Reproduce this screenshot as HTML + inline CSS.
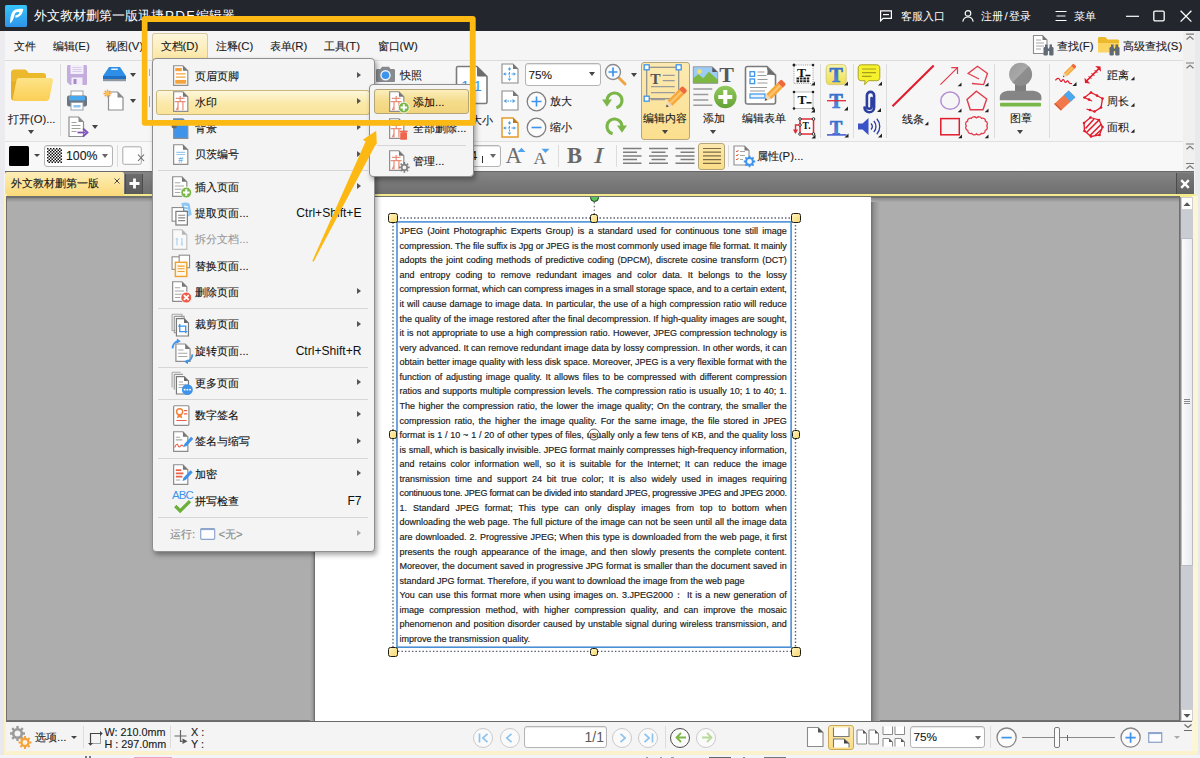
<!DOCTYPE html>
<html lang="zh">
<head>
<meta charset="utf-8">
<title>PDF Editor</title>
<style>
*{box-sizing:border-box;margin:0;padding:0}
html,body{width:1200px;height:758px;overflow:hidden;background:#f4f5f6}
body{position:relative;font-family:"Liberation Sans",sans-serif;font-size:11.4px;color:#1a1a1a;line-height:1}
.a{position:absolute}
.t{position:absolute;white-space:nowrap;line-height:14px;height:14px;-webkit-text-stroke:0.12px currentColor}
svg{position:absolute;overflow:visible}
/* title bar */
#title{left:0;top:0;width:1200px;height:31px;background:#23262d}
#title .t{color:#fff;-webkit-text-stroke:0}
/* menubar */
#menubar{left:0;top:31px;width:1200px;height:29px;background:#f5f5f6}
/* toolbars */
#tb1{left:5px;top:60px;width:1178px;height:81px;background:#f6f6f7;border-top:1px solid #dcdcdc}
#tb2{left:4.5px;top:141px;width:1179px;height:30px;background:#f8f8f9;border-top:1px solid #e0e0e0}
.vsep{position:absolute;width:1px;background:#dcdcdc}
.combo{position:absolute;background:#fff;border:1px solid #b4b4b4;border-radius:3px;box-shadow:inset 0 1px 1px #e4e4e4}
.dd{position:absolute;width:0;height:0;border-left:3.5px solid transparent;border-right:3.5px solid transparent;border-top:4px solid #444}
.cn{position:absolute;width:0;height:0;border-left:4px solid transparent;border-bottom:4px solid #222}
/* tab bar */
#tabbar{left:5px;top:171px;width:1189px;height:23px;background:linear-gradient(#5c5c5c 0,#858585 7%,#7b7b7b 45%,#6f6f6f 100%)}
#tab{left:5.3px;top:172px;width:118.7px;height:24px;background:linear-gradient(#fdeeb8,#fbd978);border-radius:2px 2px 0 0}
#yl{left:4px;top:194px;width:1191px;height:2.5px;background:#f3ea8e}
/* doc */
#doc{left:6px;top:196px;width:1174px;height:525px;background:#adadad;border:1px solid #6f6f6f;border-top:2px solid #707070}
#page{left:315px;top:197px;width:556px;height:524px;background:#fff}
.ln{position:absolute;left:0;white-space:nowrap;-webkit-text-stroke:0.18px #1d1d1d;text-align:justify;text-align-last:justify;height:14px;line-height:14px}
.ln.nj{text-align:left;text-align-last:left}
.h{position:absolute;background:linear-gradient(135deg,#fff4c0,#f8d870);border:1.5px solid #1f1d10;border-radius:2.5px}
/* status */
#status{left:6px;top:722px;width:1186px;height:29px;background:#f4f4f5}
.circ{position:absolute;width:20px;height:20px;border-radius:50%;border:1px solid #c9c9c9;background:#fafafa}
/* menus */
.menu{position:absolute;background:#f4f4f4;border:1px solid #8e8e8e;border-radius:4px;box-shadow:2px 3px 5px rgba(0,0,0,.35)}
.mi{position:absolute;left:42.3px;white-space:nowrap;height:14px;line-height:14px;font-size:11.3px;color:#111;-webkit-text-stroke:0.12px currentColor}
.msep{position:absolute;left:5px;right:6px;height:1px;background:#d6d6d6}
.marr{position:absolute;left:203.5px;margin-top:0.3px;width:0;height:0;border-top:3.7px solid transparent;border-bottom:3.7px solid transparent;border-left:4.5px solid #555}
.sc{position:absolute;right:12.5px;white-space:nowrap;height:14px;line-height:14px;font-size:12.1px;color:#111}
</style>
</head>
<body>
<!-- TITLE BAR -->
<div id="title" class="a">
<svg style="left:5px;top:5px" width="22" height="22" viewBox="0 0 22 22"><defs><linearGradient id="lg1" x1="0" y1="0" x2="0" y2="1"><stop offset="0" stop-color="#35c4fa"/><stop offset="1" stop-color="#2f94ea"/></linearGradient></defs><rect width="22" height="22" rx="1.5" fill="url(#lg1)"/><path d="M5.2 18.5 C5 12 6.5 6 10.5 4.6 C14 3.4 18.2 3.6 18.3 4.2 C17.5 8.5 15.5 12.3 10.2 12.6 L10.6 10.2 C13 10.2 14.3 8.6 14.4 7.4 C13 6.6 10.6 7 9.8 9 C9 12 8 16 5.2 18.5Z" fill="#fff"/></svg>
<div class="t" style="left:34px;top:8px;font-size:13.4px;line-height:16px;height:16px">外文教材删第一版迅捷<span style="letter-spacing:1.300px;margin-left:1px">PDF</span>编辑器</div>
<svg style="left:880px;top:10px" width="12" height="12" viewBox="0 0 12 12" fill="none" stroke="#fff" stroke-width="1.2"><path d="M0.6 0.8h10.8v7.6H3.2L0.6 10.8z"/><path d="M3 4.6h6" /></svg>
<div class="t" style="left:901px;top:9px">客服入口</div>
<svg style="left:962px;top:10px" width="12" height="12" viewBox="0 0 12 12" fill="none" stroke="#fff" stroke-width="1.2"><circle cx="6" cy="3.4" r="2.8"/><path d="M0.8 11.6c0.6-3 2.6-4.6 5.2-4.6s4.600 1.600 5.200 4.600"/></svg>
<div class="t" style="left:981px;top:9px">注册<span style="padding:0 1.500px">/</span>登录</div>
<svg style="left:1055px;top:10px" width="12" height="12" viewBox="0 0 12 12" fill="none" stroke="#fff" stroke-width="1.2"><path d="M0.500 1.500h11M1.500 6h9M0.500 10.500h11"/></svg>
<div class="t" style="left:1074px;top:9px">菜单</div>
<svg style="left:1126px;top:10px" width="13" height="12" viewBox="0 0 13 12" fill="none" stroke="#fff" stroke-width="1.2"><path d="M0 6.300h13"/></svg>
<svg style="left:1153px;top:10px" width="12" height="12" viewBox="0 0 12 12" fill="none" stroke="#fff" stroke-width="1.300"><rect x="0.800" y="1.200" width="10.400" height="9.600" rx="1.200"/></svg>
<svg style="left:1180px;top:10px" width="12" height="12" viewBox="0 0 12 12" fill="none" stroke="#fff" stroke-width="1.300"><path d="M0.600 0.800l10.800 10.800M11.400 0.800L0.600 11.600"/></svg>
</div>
<!-- MENU BAR -->
<div id="menubar" class="a">
<div class="a" style="left:0;top:0;width:4.500px;height:29px;background:#ebebf0"></div>
<div class="a" style="left:152px;top:1.500px;width:55.500px;height:27.500px;background:linear-gradient(#fdf6dc,#fbe6a2);border:1px solid #d8c9a0;border-bottom:none;border-radius:3px 3px 0 0"></div>
<div class="t" style="left:13.500px;top:7.500px">文件</div>
<div class="t" style="left:52.500px;top:7.500px">编辑(E)</div>
<div class="t" style="left:106px;top:7.500px">视图(V)</div>
<div class="t" style="left:160.500px;top:7.500px">文档(D)</div>
<div class="t" style="left:215.500px;top:7.500px">注释(C)</div>
<div class="t" style="left:269.500px;top:7.500px">表单(R)</div>
<div class="t" style="left:323.500px;top:7.500px">工具(T)</div>
<div class="t" style="left:377.500px;top:7.500px">窗口(W)</div>
<div class="t" style="left:1057px;top:7.500px">查找(F)</div>
<div class="t" style="left:1123px;top:7.500px">高级查找(S)</div>
</div>
<!-- TOOLBARS -->
<div id="tb1" class="a"></div>
<div id="tb2" class="a"></div>
<div id="tbi" class="a" style="left:0;top:0;width:0;height:0">
<!-- left window strip -->
<div class="a" style="left:0;top:60px;width:4.500px;height:112px;background:#ebebf0"></div>
<div class="a" style="left:1183px;top:31px;width:12px;height:140px;background:#f0f0f1"></div>
<div class="a" style="left:1195px;top:31px;width:5px;height:727px;background:#e9eaec"></div>
<!-- folder -->
<svg style="left:9px;top:67px" width="45" height="36" viewBox="0 0 45 36"><defs><linearGradient id="fo1" x1="0" y1="0" x2="0" y2="1"><stop offset="0" stop-color="#fde388"/><stop offset="1" stop-color="#fbcf55"/></linearGradient></defs><path d="M2 6.500c0-2.500 1-4 3.500-4h9.500c1.500 0 2.500 0.500 3.300 1.700l1.400 1.800h14.300c2 0 3 1 3 3v6h-35z" fill="#ecb92c"/><path d="M2 14.500h34.500v16c0 2-1 3-3 3h-28.500c-2 0-3-1-3-3z" fill="#e5ae22"/><path d="M7.500 13.500c0.300-1.800 1.300-2.500 3-2.500h31c2 0 2.800 1 2.400 3l-3.400 17c-0.400 2-1.500 3-3.500 3h-30c-2.500 0-3.500-1.500-3-3.500z" fill="url(#fo1)"/></svg>
<div class="t" style="left:8px;top:111.500px;font-size:11.200px">打开(O)...</div>
<div class="dd" style="left:27.500px;top:130px"></div>
<div class="vsep" style="left:60px;top:64px;height:72px"></div>
<!-- save -->
<svg style="left:66px;top:64px" width="22" height="22" viewBox="0 0 22 22"><path d="M1 2.500c0-1 0.500-1.500 1.500-1.500h17c1 0 1.500 0.500 1.500 1.500v17c0 1-0.500 1.500-1.500 1.500h-15.500l-3-3z" fill="#c3addd"/><rect x="4.500" y="1" width="13" height="9" fill="#f3eefa"/><path d="M6.500 3.500h9M6.500 5.500h9M6.500 7.500h9" stroke="#d5c8e8" stroke-width="0.900"/><rect x="5.500" y="13.500" width="11" height="7.500" fill="#f3eefa"/><rect x="7.500" y="15" width="3" height="5" fill="#a48bc6"/></svg>
<!-- printer -->
<svg style="left:66px;top:90px" width="22" height="21" viewBox="0 0 22 21"><rect x="5" y="1" width="12" height="6" fill="#fff" stroke="#9aa2ab" stroke-width="1"/><rect x="1" y="5.500" width="20" height="11" rx="2" fill="#6d7680"/><rect x="3" y="6" width="16" height="4.500" rx="1" fill="#49a8ee"/><rect x="5" y="12.500" width="12" height="7.500" fill="#fff" stroke="#9aa2ab" stroke-width="1"/><rect x="7.500" y="15" width="7" height="2.500" fill="#8cc6f2"/></svg>
<!-- export -->
<svg style="left:68px;top:116px" width="21" height="22" viewBox="0 0 21 22"><path d="M1 1h9.500l5 5v14.500h-14.500z" fill="#fff" stroke="#8d8d8d" stroke-width="1.200"/><path d="M10.500 1v5h5z" fill="#8a8a8a"/><path d="M3.500 6.500h5M3.500 9.500h9M3.500 12.500h9M3.500 15.500h5" stroke="#a0a0a0" stroke-width="1"/><path d="M9.500 16.500h8" stroke="#7b50b8" stroke-width="1.800"/><path d="M15 12.500l4.500 4-4.500 4" fill="none" stroke="#7b50b8" stroke-width="1.800"/></svg>
<div class="dd" style="left:92px;top:124.500px"></div>
<!-- scanner -->
<svg style="left:102px;top:66px" width="25" height="16" viewBox="0 0 25 16"><path d="M7 1h11l6 9h-23z" fill="#2f8fe6"/><path d="M9.500 2.500h6l0.500 1.500h-7z" fill="#e9f3fd"/><rect x="1" y="10" width="23" height="3" fill="#1f6fc4"/><rect x="1" y="13" width="23" height="2.200" fill="#8f979f"/></svg>
<div class="dd" style="left:129.500px;top:72.500px"></div>
<!-- new doc -->
<svg style="left:103px;top:89px" width="22" height="22" viewBox="0 0 22 22"><path d="M5.500 3h9l5.500 5.500v12.500h-14.500z" fill="#fff" stroke="#8d8d8d" stroke-width="1.200"/><path d="M14.500 3v5.500h5.500z" fill="#8a8a8a"/><g stroke="#f5a33a" stroke-width="1.300"><path d="M4.500 0.500v8M0.500 4.500h8M1.700 1.700l5.600 5.600M7.300 1.700l-5.600 5.600"/></g><circle cx="4.500" cy="4.500" r="2" fill="#fbc15a"/></svg>
<div class="dd" style="left:129.500px;top:99px"></div>
<div class="a" style="left:148.500px;top:69px;width:1.500px;height:7px;background:#8ab8ea"></div><div class="a" style="left:148.500px;top:96px;width:1.500px;height:11px;background:#8ab8ea"></div>
<!-- camera / snapshot -->
<svg style="left:375px;top:66px" width="21" height="17" viewBox="0 0 21 17"><path d="M1 4.500c0-1 0.500-1.500 1.500-1.500h3l1.500-2.200h7l1.500 2.200h3c1 0 1.500 0.500 1.500 1.500v10c0 1-0.500 1.500-1.500 1.500h-16c-1 0-1.500-0.500-1.500-1.500z" fill="#86898e"/><circle cx="10.500" cy="9.300" r="5.200" fill="#eef4fb"/><circle cx="10.500" cy="9.300" r="3.800" fill="#3d94ea"/></svg>
<div class="t" style="left:399.500px;top:68px">快照</div>
<!-- 1:1 page -->
<svg style="left:455px;top:65px" width="34" height="40" viewBox="0 0 34 40"><path d="M1.500 3c0-1 0.500-1.500 1.500-1.500h19l10 10v25.500c0 1-0.500 1.500-1.500 1.500h-27.500c-1 0-1.500-0.500-1.500-1.500z" fill="#fff" stroke="#7c7c7c" stroke-width="1.600"/><path d="M22 1.500v8.500c0 1 0.500 1.500 1.500 1.500h8.500z" fill="#6c6c6c"/><text x="16.500" y="26" font-family="Liberation Sans" font-size="15" fill="#3d94ea" text-anchor="middle">1:1</text></svg>
<div class="t" style="left:449px;top:112.500px">实际大小</div>
<!-- fit page icons -->
<svg style="left:501px;top:63px" width="18" height="21" viewBox="0 0 18 21"><path d="M1 1h11l5 5v14h-16z" fill="#fff" stroke="#8a8a8a" stroke-width="1.100"/><path d="M12 1v5h5z" fill="#777"/><g stroke="#4a9fe8" stroke-width="1.100" fill="#4a9fe8"><path d="M8.500 5.500v10M3.500 11h10" stroke-dasharray="2 1.500"/><path d="M8.500 4l1.800 2.500h-3.600zM8.500 18l1.800-2.500h-3.600zM2 11l2.500-1.800v3.600zM15 11l-2.500-1.800v3.600z" stroke="none"/></g></svg>
<svg style="left:501px;top:90px" width="18" height="21" viewBox="0 0 18 21"><path d="M1 1h11l5 5v14h-16z" fill="#fff" stroke="#8a8a8a" stroke-width="1.100"/><path d="M12 1v5h5z" fill="#777"/><g fill="#4a9fe8"><path d="M2.500 11l3-2v4zM14.500 11l-3-2v4z"/><rect x="6.500" y="10.400" width="1.500" height="1.200"/><rect x="9" y="10.400" width="1.500" height="1.200"/></g></svg>
<svg style="left:501px;top:116.500px" width="18" height="21" viewBox="0 0 18 21"><path d="M1 1h11l5 5v14h-16z" fill="#fff" stroke="#e39a2d" stroke-width="1.500"/><path d="M12 1v5h5z" fill="#b77a1e"/><g stroke="#4a9fe8" stroke-width="1.100" fill="#4a9fe8"><path d="M8.500 5.500v10M3.500 11h10" stroke-dasharray="2 1.500"/><path d="M8.500 4l1.800 2.500h-3.600zM8.500 18l1.800-2.500h-3.600zM2 11l2.500-1.800v3.600zM15 11l-2.500-1.800v3.600z" stroke="none"/></g></svg>
<!-- zoom combo -->
<div class="combo" style="left:524.500px;top:63px;width:76px;height:22.500px"></div>
<div class="t" style="left:528.500px;top:67.500px;font-size:11.800px">75%</div>
<div class="dd" style="left:589px;top:72px"></div>
<!-- magnifier -->
<svg style="left:604px;top:63px" width="24" height="24" viewBox="0 0 24 24"><path d="M14.500 14.500l6.500 6.500" stroke="#f0a542" stroke-width="3" stroke-linecap="round"/><circle cx="9" cy="9" r="7.500" fill="#f7fbff" stroke="#8a8a8a" stroke-width="1.300"/><path d="M9 4.500v9M4.500 9h9" stroke="#3d94ea" stroke-width="1.700"/></svg>
<div class="dd" style="left:630.500px;top:72.500px"></div>
<!-- zoom in/out -->
<svg style="left:526px;top:90.500px" width="21" height="21" viewBox="0 0 21 21"><circle cx="10.500" cy="10.500" r="9.300" fill="#fbfbfb" stroke="#7f7f7f" stroke-width="1.300"/><path d="M10.500 5.500v10M5.500 10.500h10" stroke="#3d94ea" stroke-width="1.600"/></svg>
<div class="t" style="left:550px;top:94px">放大</div>
<svg style="left:526px;top:116.500px" width="21" height="21" viewBox="0 0 21 21"><circle cx="10.500" cy="10.500" r="9.300" fill="#fbfbfb" stroke="#7f7f7f" stroke-width="1.300"/><path d="M5.500 10.500h10" stroke="#3d94ea" stroke-width="1.600"/></svg>
<div class="t" style="left:550px;top:120px">缩小</div>
<!-- rotate -->
<svg style="left:602px;top:90px" width="25" height="22" viewBox="0 0 25 22"><path d="M14.400 17.750A7.500 7.500 0 1 0 5 10.500" fill="none" stroke="#7ab648" stroke-width="3.200"/><path d="M0 9.500h10l-5 7.200z" fill="#7ab648"/></svg>
<svg style="left:602px;top:115.500px" width="25" height="22" viewBox="0 0 25 22"><g transform="translate(25,0) scale(-1,1)"><path d="M14.400 17.750A7.500 7.500 0 1 0 5 10.500" fill="none" stroke="#7ab648" stroke-width="3.200"/><path d="M0 9.500h10l-5 7.200z" fill="#7ab648"/></g></svg>
<!-- edit content (highlighted) -->
<div class="a" style="left:641px;top:62px;width:49px;height:78px;background:linear-gradient(#fceab2,#fbdf8e);border:1px solid #b5a67a;border-radius:3px"></div>
<svg style="left:643px;top:63px" width="47" height="47" viewBox="0 0 47 47"><defs><g id="pencil"><path d="M1.500-6.500L13-18 18-13 6.500-1.500z" fill="#f7a83c"/><path d="M4-4L15.500-15.500" stroke="#fbc66e" stroke-width="2.200"/><path d="M13-18l2.300-2.300q1.200-1.200 2.400 0l2.600 2.600q1.200 1.200 0 2.400L18-13z" fill="#ee6a3c"/><path d="M0 0L1.500-6.500 6.500-1.500z" fill="#ead9bd"/><path d="M0 0L0.700-2.800 2.800-0.700z" fill="#5a4a3a"/></g></defs>
<rect x="3.700" y="4.300" width="32" height="31.400" fill="none" stroke="#8d8d8d" stroke-width="1.200"/>
<g fill="#fff" stroke="#3d94ea" stroke-width="1.300"><rect x="1.200" y="1.800" width="5" height="5"/><rect x="33.200" y="1.800" width="5" height="5"/><rect x="1.200" y="33.200" width="5" height="5"/></g>
<text x="7.300" y="21" font-family="Liberation Serif" font-weight="bold" font-size="15.500" fill="#555">T</text>
<path d="M19.700 12.300h12M19.700 17.700h12M8 23.700h23.700M8 29.700h23.700M8 36.600h14" stroke="#9b9b9b" stroke-width="1.200"/>
<use href="#pencil" transform="translate(23,44.300)"/></svg>
<div class="t" style="left:642.500px;top:111.300px">编辑内容</div>
<div class="dd" style="left:661.500px;top:130px"></div>
<!-- add -->
<svg style="left:692px;top:64px" width="46" height="46" viewBox="0 0 46 46"><defs><linearGradient id="gr1" x1="0" y1="0" x2="0" y2="1"><stop offset="0" stop-color="#92c95c"/><stop offset="1" stop-color="#64a236"/></linearGradient></defs>
<path d="M1.300 2.700h19l5.400 5.400v11.200h-24.400z" fill="#9ccbf3"/><circle cx="7.500" cy="7.500" r="2.200" fill="#f5e46a"/><path d="M1.300 19.300v-5l5-4 5 4 5.500-6.500 9 8v3.500z" fill="#7cb842"/><path d="M20.300 2.700v5.400h5.400z" fill="#555"/><path d="M1.300 2.700h19l5.400 5.400v11.200h-24.400z" fill="none" stroke="#8d8d8d" stroke-width="0.800"/>
<text x="27.300" y="18" font-family="Liberation Serif" font-weight="bold" font-size="22" fill="#585858">T</text>
<path d="M1.300 25h19M1.300 30.400h15M1.300 36h15M1.300 41.300h19" stroke="#9b9b9b" stroke-width="1.500"/>
<circle cx="33.300" cy="33" r="11.300" fill="url(#gr1)"/><path d="M33.300 26v14M26.300 33h14" stroke="#fff" stroke-width="4"/></svg>
<div class="t" style="left:703px;top:111.300px">添加</div>
<div class="dd" style="left:710px;top:130px"></div>
<!-- edit form -->
<svg style="left:743px;top:64px" width="46" height="46" viewBox="0 0 46 46">
<path d="M2.500 4.500c0-1.300 0.700-2 2-2h19.500l8.500 8.500v27c0 1.300-0.700 2-2 2h-26c-1.300 0-2-0.700-2-2z" fill="#fff" stroke="#7a7a7a" stroke-width="1.600"/><path d="M23.500 2.500c1 3 1.500 5.500 0.500 8.500 3-0.500 5.500-0.500 8.500 0.500z" fill="#6c6c6c"/>
<g fill="#fff" stroke="#3d94ea" stroke-width="1.300"><rect x="7" y="7.700" width="4.600" height="4.600"/><rect x="7" y="15" width="4.600" height="4.600"/></g>
<path d="M14.500 8h7M14.500 11.500h9M14.500 15.500h10M14.500 19h10M7 23.500h17M7 27h15" stroke="#9b9b9b" stroke-width="1.200"/>
<rect x="7" y="30" width="15" height="4" fill="#e9f3fd" stroke="#3d94ea" stroke-width="1.200"/>
<use href="#pencil" transform="translate(21.700,36.700)"/></svg>
<div class="t" style="left:742px;top:111.300px">编辑表单</div>
<!-- text tool icons col -->
<svg style="left:792px;top:63px" width="24" height="23" viewBox="0 0 24 23"><rect x="2" y="2" width="19" height="18.500" fill="#fff" stroke="#8a8a8a" stroke-width="0.900" stroke-dasharray="1 1.200"/><g fill="#222"><circle cx="2" cy="2" r="1.500"/><circle cx="21" cy="2" r="1.300"/></g><text x="5" y="13.500" font-family="Liberation Serif" font-weight="bold" font-size="13.500" fill="#111">T</text><path d="M13.500 12.500h5" stroke="#111" stroke-width="1.500"/><path d="M4.500 15.500h13.500M4.500 18.300h13.500" stroke="#222" stroke-width="2" stroke-dasharray="2.600 0.800"/><path d="M23 18.500v4h-4z" fill="#222"/></svg>
<svg style="left:792px;top:89px" width="24" height="24" viewBox="0 0 24 24"><rect x="2" y="3" width="19" height="16.500" fill="#fff" stroke="#b5b5b5" stroke-width="0.900"/><g fill="#222"><circle cx="2" cy="3" r="1.300"/><circle cx="21" cy="3" r="1.300"/><circle cx="2" cy="19.500" r="1.300"/><circle cx="21" cy="19.500" r="1.300"/></g><text x="5.500" y="14.500" font-family="Liberation Serif" font-weight="bold" font-size="13.500" fill="#111">T</text><path d="M14.500 13.800h5" stroke="#111" stroke-width="1.500"/><path d="M23 19.500v4h-4z" fill="#222"/></svg>
<svg style="left:792px;top:116px" width="24" height="24" viewBox="0 0 24 24"><rect x="8" y="3" width="13.500" height="15" fill="#fff" stroke="#e02a36" stroke-width="1.500"/><g fill="#fff" stroke="#222" stroke-width="0.900"><circle cx="8" cy="3" r="1.300"/><circle cx="21.500" cy="3" r="1.300"/><circle cx="8" cy="18" r="1.300"/><circle cx="21.500" cy="18" r="1.300"/><circle cx="8" cy="9" r="1.300"/></g><text x="10.500" y="13" font-family="Liberation Serif" font-weight="bold" font-size="9.500" fill="#111">T.</text><path d="M7 9h-3.500v8" fill="none" stroke="#e02a36" stroke-width="1.400"/><path d="M1 13.500l2.500 4.500 2.500-4.500z" fill="#e02a36"/><path d="M23.500 18.500v4h-4z" fill="#222"/></svg>
<div class="vsep" style="left:820px;top:64px;height:74px"></div>
<!-- T icons col -->
<svg style="left:825px;top:63px" width="24" height="24" viewBox="0 0 24 24"><defs><linearGradient id="yl1" x1="0" y1="0" x2="0" y2="1"><stop offset="0" stop-color="#fbf6a8"/><stop offset="1" stop-color="#efdc52"/></linearGradient><linearGradient id="bl1" x1="0" y1="0" x2="0" y2="1"><stop offset="0" stop-color="#2f63c0"/><stop offset="1" stop-color="#5a9ae6"/></linearGradient></defs><rect x="1.200" y="1.600" width="20" height="20" rx="3.500" fill="url(#yl1)" stroke="#d2c874" stroke-width="0.900"/><text x="11.200" y="19" text-anchor="middle" font-family="Liberation Serif" font-weight="bold" font-size="20" fill="url(#bl1)" stroke="#3b74d0" stroke-width="0.700">T</text><path d="M23 18.500v4h-4z" fill="#222"/></svg>
<svg style="left:825px;top:90px" width="24" height="22" viewBox="0 0 24 22"><text x="11.200" y="18" text-anchor="middle" font-family="Liberation Serif" font-weight="bold" font-size="20" fill="url(#bl1)" stroke="#3b74d0" stroke-width="0.700">T</text><path d="M2 10.700h19" stroke="#e02a36" stroke-width="1.300"/><path d="M23 16.500v4h-4z" fill="#222"/></svg>
<svg style="left:825px;top:117px" width="24" height="22" viewBox="0 0 24 22"><text x="11.200" y="16.500" text-anchor="middle" font-family="Liberation Serif" font-weight="bold" font-size="18.500" fill="url(#bl1)" stroke="#3b74d0" stroke-width="0.700">T</text><path d="M2 17.900h19.500" stroke="#3a55d0" stroke-width="1.500"/><path d="M23.500 16.500v4h-4z" fill="#222"/></svg>
<div class="vsep" style="left:853px;top:64px;height:74px"></div>
<!-- comment col -->
<svg style="left:857px;top:63px" width="26" height="24" viewBox="0 0 26 24"><path d="M4.500 1.800h15c2.200 0 3.300 1.100 3.300 3.300v9.300c0 2.200-1.100 3.300-3.300 3.300h-8l-3.800 4 0.300-4h-3.500c-2.200 0-3.300-1.100-3.300-3.300v-9.300c0-2.200 1.100-3.300 3.300-3.300z" fill="#f6f12a" stroke="#a8a228" stroke-width="1"/><path d="M5 6h14M5 9.700h14M5 13.400h9.500" stroke="#a59f20" stroke-width="1.200"/><path d="M25 18.500v4h-4z" fill="#222"/></svg>
<svg style="left:862px;top:89px" width="20" height="25" viewBox="0 0 20 25"><path d="M9.500 8v8.500a2.300 2.300 0 0 1-4.600 0v-11a3.600 3.600 0 0 1 7.200 0v12a4.800 4.800 0 0 1-9.600 0" fill="none" stroke="#2c3ea0" stroke-width="2.600" stroke-linecap="round" transform="translate(0,1)"/><path d="M19 19v4h-4z" fill="#222"/></svg>
<svg style="left:857px;top:117px" width="26" height="21" viewBox="0 0 26 21"><path d="M1 6.500h4.500l6-5.500v17l-6-5.500h-4.500z" fill="#3a52c8"/><path d="M14 6.500a4.500 4.500 0 0 1 0 6M16.800 4a8 8 0 0 1 0 11M19.800 1.800a11.500 11.500 0 0 1 0 15.400" fill="none" stroke="#2c3ea0" stroke-width="1.300"/><path d="M25 16.500v4h-4z" fill="#222"/></svg>
<div class="vsep" style="left:885.500px;top:64px;height:74px"></div>
<!-- shapes -->
<svg style="left:885px;top:58px" width="115" height="84" viewBox="0 0 115 84" fill="none">
<path d="M7.500 48.200L48.700 7.500" stroke="#e01c2c" stroke-width="2.100"/>
<path d="M55.400 26.600L72.300 9.900M66.300 9.700l6.200 0 0 6.200" stroke="#e23a4a" stroke-width="1.200"/>
<ellipse cx="65.100" cy="42.700" rx="9.300" ry="8.600" stroke="#b48fd0" stroke-width="1.500"/>
<rect x="55.800" y="60.600" width="18.500" height="16.200" stroke="#e01c2c" stroke-width="1.500"/>
<path d="M94 21L83.100 15.500 92.500 8.300 102.500 15.500 98.600 26.600 87 25.500" stroke="#e23a4a" stroke-width="1.300"/>
<path d="M91.400 33.200L101.700 41 98 51.800H85.300L82 41.500z" stroke="#e23a4a" stroke-width="1.400"/>
<path d="M91.700 59.800c1.500-1.600 4-1.300 4.800 0.500 2.200-0.800 4.200 0.800 3.900 2.900 2 0.600 2.600 3 1.300 4.600 1.300 1.700 0.500 4.100-1.500 4.600 0.200 2.200-1.800 3.700-3.900 2.900-0.900 2-3.500 2.200-4.800 0.600-1.300 1.600-3.900 1.400-4.800-0.600-2.100 0.800-4.100-0.700-3.900-2.900-2-0.500-2.800-2.900-1.500-4.600-1.300-1.600-0.700-4 1.300-4.600-0.300-2.100 1.700-3.700 3.900-2.900 0.800-1.800 3.300-2.100 4.800-0.500z" stroke="#e23a4a" stroke-width="1.300"/>
<g fill="#222"><path d="M43.400 63.500v3.800h-3.800z"/><path d="M76.500 24.500v3.800h-3.800z"/><path d="M76.500 50.500v3.800h-3.800z"/><path d="M77 76.500v3.800h-3.800z"/><path d="M103.500 24.500v3.800h-3.800z"/><path d="M103.500 50.500v3.800h-3.800z"/><path d="M103.500 76.500v3.800h-3.800z"/></g>
</svg>
<div class="t" style="left:902px;top:111.500px">线条</div>
<div class="vsep" style="left:994px;top:64px;height:74px"></div>
<!-- stamp -->
<svg style="left:998px;top:62px" width="45" height="46" viewBox="0 0 45 46"><defs><linearGradient id="st1" x1="0" y1="0" x2="1" y2="1"><stop offset="0" stop-color="#9a9a9a"/><stop offset="0.480" stop-color="#a8a8a8"/><stop offset="0.520" stop-color="#8e8e8e"/><stop offset="1" stop-color="#8a8a8a"/></linearGradient></defs>
<path d="M17 18h11v12h-11z" fill="#7e7e7e"/><circle cx="22.600" cy="12.300" r="11.500" fill="url(#st1)"/>
<path d="M1.800 38.300v-3c0-4 4-6.500 10-6.500h21.600c6 0 10 2.500 10 6.500v3z" fill="#858585"/>
<rect x="2" y="40.700" width="41" height="3.800" rx="1" fill="#7ab648"/></svg>
<div class="t" style="left:1009.500px;top:111px">图章</div>
<div class="dd" style="left:1016.500px;top:129.500px"></div>
<div class="vsep" style="left:1048.500px;top:64px;height:74px"></div>
<!-- pencil squiggle -->
<svg style="left:1054px;top:62px" width="24" height="26" viewBox="0 0 24 26"><use href="#pencil" transform="translate(8.800,15.200) scale(0.640)"/><path d="M1.400 18.400c1.500-2.500 3.500-2.800 4.300-0.800 0.600 1.500 1.200 2.800 2.300 1 0.900-1.500 1.700-1.200 2.300 0.300 0.500 1.400 1.200 2.200 2.200 0.700 0.900-1.300 1.600-0.900 2.100 0.400 0.500 1.300 1.500 1.800 3.500 1.500" fill="none" stroke="#e01c2c" stroke-width="1.200"/><path d="M22.500 20v4h-4z" fill="#222"/></svg>
<!-- eraser -->
<svg style="left:1053px;top:89px" width="24" height="23" viewBox="0 0 24 23"><path d="M1.200 15L15.700 1.600 22.400 8.300 7.900 21.600z" fill="#f0784a"/><path d="M10.900 6L15.700 1.600 22.400 8.300 17.600 12.700z" fill="#4aa8f0"/><path d="M1.200 15l6.700 6.600 1-0.900-6.700-6.600z" fill="#d45a30"/></svg>
<!-- distance -->
<svg style="left:1083px;top:65px" width="20" height="20" viewBox="0 0 20 20" fill="none" stroke="#e01c2c"><path d="M3 16.500L16.500 3" stroke-width="1.700"/><path d="M1.500 12.700l0.500 5.300 5.300 0.500zM18 6.800l-0.500-5.300-5.300-0.500z" fill="#e01c2c" stroke="none"/><path d="M5.500 11l3 3M8.500 8l3 3M11.500 5l3 3" stroke-width="1"/></svg>
<div class="t" style="left:1106.500px;top:67.500px">距离</div>
<!-- perimeter -->
<svg style="left:1083px;top:91px" width="22" height="22" viewBox="0 0 22 22" fill="none" stroke="#e01c2c" stroke-width="1.300"><path d="M9 10L1.500 6.500 8 1.500 19.500 7.500 18 16.500 11.500 20.500 3.500 18"/><g fill="#e01c2c" stroke="none"><circle cx="1.500" cy="6.500" r="1.300"/><circle cx="8" cy="1.500" r="1.300"/><circle cx="19.500" cy="7.500" r="1.300"/><circle cx="18" cy="16.500" r="1.300"/><circle cx="11.500" cy="20.500" r="1.300"/><circle cx="6" cy="8.600" r="1.300"/><circle cx="14" cy="4.600" r="1.300"/><circle cx="7" cy="19" r="1.300"/></g></svg>
<div class="t" style="left:1106.500px;top:93.500px">周长</div>
<!-- area -->
<svg style="left:1082px;top:116px" width="22" height="22" viewBox="0 0 22 22" fill="none" stroke="#e01c2c" stroke-width="1.300"><path d="M8.500 1.500L17 4l3.500 7-3 8-8.500 1.500L2.500 15 2 7z"/><path d="M3.500 12.500L12 3M4.500 16.500L16.500 4.500M8 19.500L19.500 8M13 19.500L20 13" stroke-width="1.500"/><g fill="#e01c2c" stroke="none"><circle cx="8.500" cy="1.500" r="1.300"/><circle cx="17" cy="4" r="1.300"/><circle cx="20.500" cy="11" r="1.300"/><circle cx="17.500" cy="19" r="1.300"/><circle cx="9" cy="20.500" r="1.300"/><circle cx="2.500" cy="15" r="1.300"/><circle cx="2" cy="7" r="1.300"/></g></svg>
<div class="t" style="left:1106.500px;top:119.500px">面积</div>
<svg style="left:1130px;top:75px" width="6" height="60" viewBox="0 0 6 60" fill="#222"><path d="M4.500 1.500v3.800h-3.800z"/><path d="M4.500 28v3.800h-3.800z"/><path d="M4.500 54v3.800h-3.800z"/></svg>
<!-- chevrons on right -->
<svg style="left:1184px;top:31px" width="12" height="142" viewBox="0 0 12 142" fill="none" stroke="#7a7a7a" stroke-width="1.200"><path d="M2 3.200h8M2.500 8.500l3.500-3 3.500 3M2 32h8M2.500 37.300l3.500-3 3.500 3M2 113h8M2.500 118.300l3.500-3 3.500 3M2 132.500h8M2.500 137.800l3.500-3 3.500 3"/></svg>
<!-- find icons in menubar -->
<svg style="left:1032px;top:34px" width="24" height="23" viewBox="0 0 24 23"><path d="M1.500 1.500h9l4.500 4.500v13.500h-13.500z" fill="#fff" stroke="#8d8d8d" stroke-width="1.100"/><path d="M10.500 1.500v4.500h4.500z" fill="#777"/><path d="M4 6h5M4 9h8M4 12h8M4 15h5" stroke="#a5a5a5" stroke-width="1"/><g fill="#5f6a75"><rect x="11.500" y="13" width="4.300" height="8.500" rx="1.200"/><rect x="17.200" y="13" width="4.300" height="8.500" rx="1.200"/><rect x="13" y="10.500" width="2.500" height="4"/><rect x="17.500" y="10.500" width="2.500" height="4"/><rect x="15" y="14.500" width="3" height="2.500"/></g></svg>
<svg style="left:1097px;top:35px" width="25" height="22" viewBox="0 0 25 22"><path d="M1 3.500c0-1 0.500-1.500 1.500-1.500h6l2 2.500h10c1 0 1.500 0.500 1.500 1.500v10.500h-21z" fill="#ecb92c"/><path d="M1 8h21l-1.500 9.500h-19.500z" fill="#fbd462"/><g fill="#5f6a75"><rect x="12.500" y="12" width="4.300" height="8.500" rx="1.200"/><rect x="18.200" y="12" width="4.300" height="8.500" rx="1.200"/><rect x="14" y="9.500" width="2.500" height="4"/><rect x="18.500" y="9.500" width="2.500" height="4"/><rect x="16" y="13.500" width="3" height="2.500"/></g></svg>
<!-- ROW 2 -->
<div class="a" style="left:9px;top:146px;width:20px;height:20px;background:#000;border-radius:1.500px"></div>
<div class="dd" style="left:34px;top:153.500px;border-left-width:3px;border-right-width:3px;border-top-width:3.500px"></div>
<div class="combo" style="left:43.500px;top:144.500px;width:69.500px;height:22.500px"></div>
<svg style="left:47px;top:148px" width="15" height="15" viewBox="0 0 15 15"><defs><pattern id="chk" width="3" height="3" patternUnits="userSpaceOnUse"><rect width="3" height="3" fill="#fff"/><rect width="1.500" height="1.500" fill="#111"/><rect x="1.500" y="1.500" width="1.500" height="1.500" fill="#111"/></pattern></defs><rect width="15" height="15" fill="url(#chk)"/></svg>
<div class="t" style="left:66px;top:148.500px;font-size:12.300px">100%</div>
<div class="dd" style="left:101.500px;top:153.500px;border-top-color:#666"></div>
<div class="vsep" style="left:116.500px;top:145px;height:22px"></div>
<svg style="left:122px;top:146px" width="22" height="20" viewBox="0 0 22 20"><rect x="0.800" y="0.800" width="18.500" height="17.500" rx="1.500" fill="#fdfdfd" stroke="#a9a9a9" stroke-width="1"/><path d="M16 8.500l6 6.500M22 8.500l-6 6.500" stroke="#666" stroke-width="1.100"/></svg>
<!-- font-size combo tail -->
<div class="combo" style="left:430px;top:144.500px;width:70.500px;height:22.500px"></div>
<div class="t" style="left:470px;top:148.500px;font-size:13px">4</div>
<div class="a" style="left:481.500px;top:155.500px;width:1.200px;height:7px;background:#333"></div>
<div class="dd" style="left:489.500px;top:153.500px;border-top-color:#666"></div>
<!-- A grow / shrink -->
<div class="t" style="left:505.500px;top:143px;font-family:'Liberation Serif',serif;font-size:22.500px;line-height:26px;height:26px;color:#6c6c6c;-webkit-text-stroke:0">A</div>
<svg style="left:517px;top:146.500px" width="9" height="6" viewBox="0 0 9 6"><path d="M0.500 5L4.500 0.800 8.500 5z" fill="#4fa3ea"/></svg>
<div class="t" style="left:533.500px;top:146.500px;font-family:'Liberation Serif',serif;font-size:17.500px;line-height:22px;height:22px;color:#6c6c6c;-webkit-text-stroke:0">A</div>
<svg style="left:540.500px;top:147.500px" width="9" height="6" viewBox="0 0 9 6"><path d="M0.500 0.800L4.500 5 8.500 0.800z" fill="#4fa3ea"/></svg>
<div class="vsep" style="left:557.500px;top:145px;height:22px"></div>
<div class="t" style="left:567px;top:142px;font-family:'Liberation Serif',serif;font-weight:bold;font-size:22.500px;line-height:28px;height:28px;color:#686868">B</div>
<div class="t" style="left:594px;top:142px;transform:scaleX(1.250);transform-origin:0 0;font-family:'Liberation Serif',serif;font-style:italic;font-size:22.500px;line-height:28px;height:28px;color:#686868">I</div>
<div class="vsep" style="left:616px;top:145px;height:22px"></div>
<!-- aligns -->
<svg style="left:623px;top:147px" width="72" height="18" viewBox="0 0 72 18" stroke="#7e7e7e" stroke-width="1.500"><path d="M0 1.500h18.500M0 5.200h14M0 8.900h18.500M0 12.600h14M0 16.300h18.500"/><path d="M26 1.500h19M28.500 5.200h14M26 8.900h19M28.500 12.600h14M26 16.300h19"/><path d="M52.500 1.500h19M57.500 5.200h14M52.500 8.900h19M57.500 12.600h14M52.500 16.300h19"/></svg>
<div class="a" style="left:698px;top:143px;width:27px;height:26.500px;background:linear-gradient(#fce9ae,#fbdd88);border:1px solid #b5a67a;border-radius:3px"></div>
<svg style="left:702.500px;top:147px" width="19" height="18" viewBox="0 0 19 18" stroke="#7d6c42" stroke-width="1.200"><path d="M0 1.500h18M0 5.200h18M0 8.900h18M0 12.600h18M0 16.300h18"/></svg>
<div class="vsep" style="left:728px;top:145px;height:22px"></div>
<!-- properties -->
<svg style="left:733px;top:145px" width="23" height="23" viewBox="0 0 23 23"><path d="M1 1h10.500l4.500 4.500v14.500h-15z" fill="#fff" stroke="#8d8d8d" stroke-width="1.100"/><path d="M11.500 1v4.500h4.500z" fill="#777"/><path d="M3 6l1 1 1.500-2M3 10l1 1 1.500-2M3 14l1 1 1.500-2" fill="none" stroke="#e8603a" stroke-width="1"/><path d="M7 6.500h5M7 10.500h5M7 14.500h3" stroke="#a5a5a5" stroke-width="1"/><g transform="translate(16.500,16.500) scale(0.820)"><circle r="4.200" fill="#f6f6f7" stroke="#3d94ea" stroke-width="2.400"/><g stroke="#3d94ea" stroke-width="2.200"><path d="M0-7v2.500M0 4.500v2.500M-7 0h2.500M4.500 0h2.500M-5-5l1.800 1.800M3.200 3.200l1.800 1.800M5-5l-1.800 1.800M-3.200 3.200l-1.800 1.800"/></g></g></svg>
<div class="t" style="left:756.800px;top:149px">属性(P)...</div>
</div>
<!-- TAB BAR -->
<div id="tabbar" class="a"></div>
<div id="yl" class="a"></div>
<div id="tab" class="a"></div>
<div class="t" style="left:10.500px;top:175.500px">外文教材删第一版</div>
<svg style="left:113.500px;top:177.500px" width="6" height="6" viewBox="0 0 6 6"><path d="M0.500 0.500l5 5M5.500 0.500l-5 5" stroke="#4a4a4a" stroke-width="1"/></svg>
<div class="a" style="left:125px;top:173.500px;width:18px;height:20px;background:linear-gradient(#6c6c6c,#5a5a5a);border-left:1px solid #4c4c4c;border-right:1px solid #4c4c4c"></div>
<svg style="left:128.500px;top:177.500px" width="11" height="11" viewBox="0 0 11 11"><path d="M5.500 0.500v10M0.500 5.500h10" stroke="#fff" stroke-width="2.800"/></svg>
<div class="a" style="left:1175.500px;top:173px;width:18px;height:21px;background:linear-gradient(#787878,#626262);border-left:1px solid #4c4c4c"></div>
<svg style="left:1179.500px;top:178.500px" width="10" height="10" viewBox="0 0 10 10"><path d="M1.200 1.200l7.600 7.600M8.800 1.200l-7.600 7.600" stroke="#fff" stroke-width="2.400"/></svg>
<!-- DOC -->
<div class="a" style="left:0;top:172px;width:4px;height:586px;background:#e8e8ee"></div><div class="a" style="left:3.500px;top:194px;width:3px;height:561px;background:#fcf1c4"></div>
<div class="a" style="left:1192px;top:196px;width:5.500px;height:559px;background:#fbf6d6;border-radius:0 0 4px 0"></div>
<div class="a" style="left:3.500px;top:751px;width:1194px;height:4px;background:#fbf1cc;border-radius:0 0 4px 4px"></div>
<div class="a" style="left:0;top:755px;width:1200px;height:3px;background:#f3f3f8"></div>
<div id="doc" class="a"></div>
<div class="a" style="left:871px;top:198px;width:9px;height:523px;background:linear-gradient(90deg,#707070,#939393 35%,#adadad)"></div>
<div class="a" style="left:7px;top:198px;width:1172px;height:4px;background:linear-gradient(#8a8a8a,#ababab)"></div>
<div class="a" style="left:310px;top:198px;width:5px;height:523px;background:linear-gradient(90deg,#adadad,#9c9c9c 55%,#666 100%)"></div>
<!-- scrollbar -->
<div class="a" style="left:1180px;top:196.500px;width:12.500px;height:524.500px;background:#c9ccd3;border-left:1px solid #8a8a8a"></div>
<div class="a" style="left:1181px;top:197px;width:11.500px;height:12.500px;background:#fdfdfd;border:1px solid #d0d0d0"></div>
<svg style="left:1183px;top:200.500px" width="8" height="6" viewBox="0 0 8 6"><path d="M0.500 5L4 1.200 7.500 5z" fill="#555"/></svg>
<div class="a" style="left:1181px;top:238px;width:11.500px;height:328px;background:linear-gradient(90deg,#fbfbfc,#e9ebf0);border:1px solid #b9bcc4;border-radius:1px"></div>
<div class="a" style="left:1184px;top:399px;width:5.500px;height:1px;background:#8a8a8a;box-shadow:0 2px 0 #8a8a8a,0 4px 0 #8a8a8a"></div>
<div class="a" style="left:1181px;top:709px;width:11.500px;height:12px;background:#fdfdfd;border:1px solid #d0d0d0"></div>
<svg style="left:1183px;top:712.500px" width="8" height="6" viewBox="0 0 8 6"><path d="M0.500 1L4 4.800 7.500 1z" fill="#555"/></svg>
<div id="page" class="a"></div>
<!-- PAGETEXT -->
<div id="txt" class="a" style="left:399.6px;top:224.1px;width:387.20px;height:430px;transform:scaleX(1.0);transform-origin:0 0;font-size:9.0px;color:#1d1d1d">
<div class="ln" style="top:0.00px;width:387.20px;">JPEG (Joint Photographic Experts Group) is a standard used for continuous tone still image</div>
<div class="ln" style="top:14.57px;width:387.20px;letter-spacing:-0.037px;">compression. The file suffix is Jpg or JPEG is the most commonly used image file format. It mainly</div>
<div class="ln" style="top:29.14px;width:387.20px;">adopts the joint coding methods of predictive coding (DPCM), discrete cosine transform (DCT)</div>
<div class="ln" style="top:43.71px;width:387.20px;">and entropy coding to remove redundant images and color data. It belongs to the lossy</div>
<div class="ln" style="top:58.28px;width:387.20px;letter-spacing:-0.068px;">compression format, which can compress images in a small storage space, and to a certain extent,</div>
<div class="ln" style="top:72.85px;width:387.20px;">it will cause damage to image data. In particular, the use of a high compression ratio will reduce</div>
<div class="ln" style="top:87.42px;width:387.20px;">the quality of the image restored after the final decompression. If high-quality images are sought,</div>
<div class="ln" style="top:101.99px;width:387.20px;">it is not appropriate to use a high compression ratio. However, JPEG compression technology is</div>
<div class="ln" style="top:116.56px;width:387.20px;">very advanced. It can remove redundant image data by lossy compression. In other words, it can</div>
<div class="ln" style="top:131.13px;width:387.20px;">obtain better image quality with less disk space. Moreover, JPEG is a very flexible format with the</div>
<div class="ln" style="top:145.70px;width:387.20px;">function of adjusting image quality. It allows files to be compressed with different compression</div>
<div class="ln" style="top:160.27px;width:387.20px;">ratios and supports multiple compression levels. The compression ratio is usually 10; 1 to 40; 1.</div>
<div class="ln" style="top:174.84px;width:387.20px;">The higher the compression ratio, the lower the image quality; On the contrary, the smaller the</div>
<div class="ln" style="top:189.41px;width:387.20px;">compression ratio, the higher the image quality. For the same image, the file stored in JPEG</div>
<div class="ln" style="top:203.98px;width:387.20px;">format is 1 / 10 ~ 1 / 20 of other types of files, usually only a few tens of KB, and the quality loss</div>
<div class="ln" style="top:218.55px;width:387.20px;">is small, which is basically invisible. JPEG format mainly compresses high-frequency information,</div>
<div class="ln" style="top:233.12px;width:387.20px;">and retains color information well, so it is suitable for the Internet; It can reduce the image</div>
<div class="ln" style="top:247.69px;width:387.20px;">transmission time and support 24 bit true color; It is also widely used in images requiring</div>
<div class="ln" style="top:262.26px;width:387.20px;letter-spacing:-0.216px;">continuous tone. JPEG format can be divided into standard JPEG, progressive JPEG and JPEG 2000.</div>
<div class="ln" style="top:276.83px;width:387.20px;">1. Standard JPEG format; This type can only display images from top to bottom when</div>
<div class="ln" style="top:291.40px;width:387.20px;">downloading the web page. The full picture of the image can not be seen until all the image data</div>
<div class="ln" style="top:305.97px;width:387.20px;">are downloaded. 2. Progressive JPEG; When this type is downloaded from the web page, it first</div>
<div class="ln" style="top:320.54px;width:387.20px;">presents the rough appearance of the image, and then slowly presents the complete content.</div>
<div class="ln" style="top:335.11px;width:387.20px;">Moreover, the document saved in progressive JPG format is smaller than the document saved in</div>
<div class="ln nj" style="top:349.68px;width:387.20px;">standard JPG format. Therefore, if you want to download the image from the web page</div>
<div class="ln" style="top:364.25px;width:387.20px;">You can use this format more when using images on. 3.JPEG2000： It is a new generation of</div>
<div class="ln" style="top:378.82px;width:387.20px;">image compression method, with higher compression quality, and can improve the mosaic</div>
<div class="ln" style="top:393.39px;width:387.20px;">phenomenon and position disorder caused by unstable signal during wireless transmission, and</div>
<div class="ln nj" style="top:407.96px;width:387.20px;">improve the transmission quality.</div>
</div>
<svg style="left:380px;top:190px" width="430" height="480" viewBox="380 190 430 480" fill="none">
<rect x="393" y="218" width="402.500" height="433.400" stroke="#5d6470" stroke-width="1.400" stroke-dasharray="1.500 2"/>
<rect x="397" y="221.900" width="394.100" height="425.300" stroke="#4a90d6" stroke-width="1.600"/>
<path d="M594.300 202v13" stroke="#6a6a6a" stroke-width="1.200" stroke-dasharray="1.500 2.200"/>
<circle cx="594" cy="434.500" r="5.500" stroke="#5e5e5e" stroke-width="1"/>
</svg>
<div class="a" style="left:589.800px;top:196.500px;width:9px;height:5.500px;overflow:hidden"><div class="a" style="left:0;top:-4px;width:9px;height:9px;border-radius:50%;background:#5cc45c;border:1.300px solid #173a17"></div></div>
<div class="h" style="left:388px;top:213.300px;width:10px;height:9.600px"></div>
<div class="h" style="left:590px;top:214.100px;width:8.300px;height:8.600px"></div>
<div class="h" style="left:791px;top:213.200px;width:9.800px;height:9.800px"></div>
<div class="h" style="left:388.800px;top:430.300px;width:8.300px;height:8.600px"></div>
<div class="h" style="left:791.800px;top:430.300px;width:8.300px;height:8.600px"></div>
<div class="h" style="left:388px;top:647px;width:10px;height:9.700px"></div>
<div class="h" style="left:590px;top:647.500px;width:8.300px;height:8.600px"></div>
<div class="h" style="left:791px;top:647px;width:9.800px;height:9.700px"></div>
<!-- /PAGETEXT -->
<!-- STATUS -->
<div id="status" class="a"></div>
<div class="a" style="left:6px;top:721px;width:1186px;height:1px;background:#6a6a6a"></div>
<div id="sb" class="a" style="left:0;top:0;width:0;height:0">
<!-- gears -->
<svg style="left:9px;top:725px" width="24" height="25" viewBox="0 0 24 25"><g transform="translate(8.500,8.500)"><circle r="4.300" fill="none" stroke="#9a9a9a" stroke-width="2.600"/><g stroke="#9a9a9a" stroke-width="2.400"><path d="M0-7.500v2.500M0 5v2.500M-7.500 0h2.500M5 0h2.500M-5.300-5.300l1.800 1.800M3.500 3.500l1.800 1.800M5.300-5.300l-1.800 1.800M-3.500 3.500l-1.800 1.800"/></g></g><g transform="translate(16,17.500)"><circle r="3.600" fill="#fdf3e0" stroke="#f5a33a" stroke-width="2.300"/><g stroke="#f5a33a" stroke-width="2.100"><path d="M0-6.500v2.200M0 4.300v2.200M-6.500 0h2.200M4.300 0h2.200M-4.600-4.600l1.600 1.600M3 3l1.600 1.600M4.600-4.600l-1.600 1.600M-3 3l-1.600 1.600"/></g></g></svg>
<div class="t" style="left:35px;top:730px">选项...</div>
<div class="dd" style="left:71px;top:735.500px;border-left-width:3px;border-right-width:3px;border-top-width:3.500px"></div>
<div class="vsep" style="left:82.500px;top:726px;height:22px"></div>
<svg style="left:87px;top:730px" width="16" height="17" viewBox="0 0 16 17" fill="none"><rect x="3.500" y="3.500" width="10" height="10" stroke="#555" stroke-width="1" stroke-dasharray="1 1"/><path d="M3.500 13.500v-10h10" stroke="#444" stroke-width="1.200"/><path d="M13 1l2.800 2.500-2.800 2.500zM1 13l2.500 2.800 2.500-2.800z" fill="#444"/></svg>
<div class="t" style="left:104.500px;top:724.500px;font-size:10.800px">W: 210.0mm</div>
<div class="t" style="left:104.500px;top:736.500px;font-size:10.800px">H : 297.0mm</div>
<div class="vsep" style="left:170px;top:726px;height:22px"></div>
<svg style="left:174px;top:729px" width="15" height="17" viewBox="0 0 15 17" fill="none"><path d="M6.500 1v12M0.500 7h12" stroke="#666" stroke-width="1.200"/><path d="M8.500 9.500l5 2.800-5 2.800z" fill="#555"/><path d="M6.500 12.300h2" stroke="#555" stroke-width="1.200"/></svg>
<div class="t" style="left:191px;top:724.500px;font-size:10.800px">X :</div>
<div class="t" style="left:191px;top:736.500px;font-size:10.800px">Y :</div>
<!-- nav -->
<div class="circ" style="left:473px;top:727.500px"></div>
<svg style="left:477.500px;top:732.500px" width="11" height="10" viewBox="0 0 11 10" fill="none" stroke="#8fc3ee" stroke-width="1.700"><path d="M1.500 0.500v9M9.500 0.800L4.800 5l4.700 4.200"/></svg>
<div class="circ" style="left:499.500px;top:727.500px"></div>
<svg style="left:505px;top:732.500px" width="8" height="10" viewBox="0 0 8 10" fill="none" stroke="#8fc3ee" stroke-width="1.700"><path d="M6.500 0.800L1.800 5l4.700 4.200"/></svg>
<div class="combo" style="left:523.500px;top:725.500px;width:83.500px;height:22.500px"></div>
<div class="t" style="left:560px;width:44px;text-align:right;top:728px;font-size:14px;line-height:18px;height:18px;color:#5a5a5a;-webkit-text-stroke:0">1/1</div>
<div class="circ" style="left:612px;top:727.500px"></div>
<svg style="left:618.500px;top:732.500px" width="8" height="10" viewBox="0 0 8 10" fill="none" stroke="#8fc3ee" stroke-width="1.700"><path d="M1.500 0.800L6.200 5l-4.700 4.200"/></svg>
<div class="circ" style="left:637.500px;top:727.500px"></div>
<svg style="left:642.500px;top:732.500px" width="11" height="10" viewBox="0 0 11 10" fill="none" stroke="#8fc3ee" stroke-width="1.700"><path d="M9.500 0.500v9M1.500 0.800L6.200 5l-4.700 4.200"/></svg>
<div class="vsep" style="left:664.500px;top:726px;height:22px"></div>
<div class="circ" style="left:670px;top:727.500px;border-color:#4a4a4a;border-width:1.200px"></div>
<svg style="left:674.500px;top:732px" width="12" height="11" viewBox="0 0 12 11" fill="none" stroke="#7ab648" stroke-width="1.800"><path d="M11 5.500h-9.500M6 1l-4.500 4.500 4.500 4.500"/></svg>
<div class="circ" style="left:696px;top:727.500px"></div>
<svg style="left:700.500px;top:732px" width="12" height="11" viewBox="0 0 12 11" fill="none" stroke="#b8da9a" stroke-width="1.800"><path d="M1 5.500h9.500M6 1l4.500 4.500-4.500 4.500"/></svg>
<!-- page layout icons -->
<svg style="left:806px;top:726px" width="19" height="22" viewBox="0 0 19 22"><path d="M1.500 1.500h10.500l5 5v14h-15.500z" fill="#fff" stroke="#8a8a8a" stroke-width="1.100"/><path d="M12 1.500v5h5z" fill="#555"/></svg>
<div class="a" style="left:828px;top:724.500px;width:26px;height:25.500px;background:linear-gradient(#fce9ae,#fbdc84);border:1px solid #c9a958;border-radius:3px"></div>
<svg style="left:832px;top:727px" width="19" height="21" viewBox="0 0 19 21"><path d="M1.500 0.500v9h15.500v-9" fill="#fff" stroke="#7a7a7a" stroke-width="1.100"/><path d="M1.500 20.500v-8.500h10.500l5 4.500v4" fill="#fff" stroke="#7a7a7a" stroke-width="1.100"/><path d="M12 12v4.500h5z" fill="#444"/></svg>
<svg style="left:856px;top:729px" width="24" height="16" viewBox="0 0 24 16"><path d="M1 1h6l3.500 3.500v10.500h-9.500z" fill="#fff" stroke="#8a8a8a" stroke-width="1"/><path d="M7 1v3.500h3.500z" fill="#555"/><path d="M13 1h6l3.500 3.500v10.500h-9.500z" fill="#fff" stroke="#8a8a8a" stroke-width="1"/><path d="M19 1v3.500h3.500z" fill="#555"/></svg>
<svg style="left:882px;top:726px" width="24" height="22" viewBox="0 0 24 22"><g fill="#fff" stroke="#8a8a8a" stroke-width="1"><path d="M1 0.500v8h9.500v-8M13 0.500v8h9.500v-8"/><path d="M1 20.500v-8h6l3.500 3.500v4.500M13 20.500v-8h6l3.500 3.500v4.500"/></g><path d="M7 12.500v3.500h3.500zM19 12.500v3.500h3.500z" fill="#555"/></svg>
<div class="combo" style="left:909.500px;top:725.500px;width:75.500px;height:22.500px"></div>
<div class="t" style="left:913.500px;top:730px;font-size:11.800px">75%</div>
<div class="dd" style="left:974.500px;top:735.500px;border-top-color:#666"></div>
<div class="vsep" style="left:990px;top:726px;height:22px"></div>
<!-- zoom slider -->
<svg style="left:996px;top:727px" width="22" height="22" viewBox="0 0 22 22"><circle cx="10.600" cy="10.600" r="9.600" fill="#fbfbfb" stroke="#858585" stroke-width="1.300"/><path d="M5.500 10.600h10.200" stroke="#3d94ea" stroke-width="1.700"/></svg>
<div class="a" style="left:1022px;top:737px;width:93px;height:1.200px;background:#8a8a8a"></div>
<div class="a" style="left:1067px;top:734.500px;width:1.200px;height:6px;background:#666"></div>
<div class="a" style="left:1053.500px;top:726.500px;width:6.500px;height:21.500px;background:#fbfbfb;border:1px solid #7a7a7a;border-radius:2px"></div>
<svg style="left:1119.500px;top:727px" width="22" height="22" viewBox="0 0 22 22"><circle cx="10.600" cy="10.600" r="9.600" fill="#fbfbfb" stroke="#858585" stroke-width="1.300"/><path d="M5.500 10.600h10.200M10.600 5.500v10.200" stroke="#3d94ea" stroke-width="1.700"/></svg>
<svg style="left:1148px;top:732px" width="15" height="12" viewBox="0 0 15 12"><rect x="0.700" y="0.700" width="13" height="9.600" fill="#fdfdff" stroke="#8fa6cc" stroke-width="1.300"/><path d="M0.700 1.200h13" stroke="#8fa6cc" stroke-width="1.800"/></svg>
<div class="dd" style="left:1173.500px;top:736px;border-left-width:3px;border-right-width:3px;border-top-width:3.500px;border-top-color:#aaa"></div>
<svg style="left:1183px;top:723px" width="10" height="9" viewBox="0 0 10 9" fill="none" stroke="#6a6a6a" stroke-width="1.200"><path d="M1 7.500h8M1.500 1.500l3.500 3 3.500-3"/></svg>
<!-- bottom cut-off bits -->
<div class="a" style="left:85px;top:755.500px;width:1.500px;height:2.500px;background:#777"></div>
<div class="a" style="left:89px;top:755.500px;width:1.500px;height:2.500px;background:#777"></div>
<div class="a" style="left:134px;top:756.500px;width:38px;height:1.500px;background:#f0a0b8"></div>
<div class="a" style="left:646px;top:756.500px;width:2px;height:1.500px;background:#999"></div><div class="a" style="left:660px;top:756.500px;width:2px;height:1.500px;background:#999"></div><div class="a" style="left:671px;top:756.500px;width:3px;height:1.500px;background:#999"></div>
<div class="a" style="left:709px;top:756.500px;width:22px;height:1.500px;background:#666"></div><div class="a" style="left:743px;top:756.500px;width:2px;height:1.500px;background:#888"></div>
<div class="a" style="left:764px;top:756.500px;width:22px;height:1.500px;background:#777"></div>
</div>
<!-- MENUS -->
<div id="mm" class="menu" style="left:152px;top:58px;width:223px;height:493.500px">
<div class="a" style="left:2.500px;top:30.500px;width:214.500px;height:25px;background:linear-gradient(#fdf7dc 0,#fbe9a8 55%,#fbe39a 100%);border:1px solid #c9b77c;border-radius:3px"></div>
<div class="msep" style="top:111.4px"></div>
<div class="msep" style="top:248.9px"></div>
<div class="msep" style="top:307.5px"></div>
<div class="msep" style="top:340.3px"></div>
<div class="msep" style="top:399.3px"></div>
<div class="msep" style="top:458.3px"></div>
<svg style="left:19px;top:4.0px" width="24" height="25.100" viewBox="0 -1 22 23"><path d="M1.500 1.500h8.500l4.500 4.500v13.500h-13z" fill="#fff" stroke="#8d8d8d" stroke-width="1.100"/><path d="M10 1.500v4.500h4.500z" fill="#777"/><rect x="3" y="3.500" width="6" height="3" fill="#f5a33a"/><rect x="3" y="14.500" width="10" height="3.500" fill="#f5a33a"/><path d="M3.500 9h9M3.500 12h9" stroke="#f5a33a" stroke-width="1.200"/></svg>
<div class="mi" style="top:9.5px">页眉页脚</div>
<div class="marr" style="top:12.5px"></div>
<svg style="left:19px;top:30.4px" width="24" height="25.100" viewBox="0 -1 22 23"><path d="M1.500 1.500h8.500l4.500 4.500v13.500h-13z" fill="#fff" stroke="#8d8d8d" stroke-width="1.100"/><path d="M10 1.500v4.500h4.500z" fill="#777"/><g stroke="#e98e7a" stroke-width="1.150" fill="none"><path d="M3.5 7.5h8M2.5 10.5h10M7.5 5.5v4.500M5.5 10.5v8M10.0 10.5v8M5.5 15.0l-1.500 3.500"/></g></svg>
<div class="mi" style="top:35.9px">水印</div>
<div class="marr" style="top:38.9px"></div>
<svg style="left:19px;top:56.6px" width="24" height="25.100" viewBox="0 -1 22 23"><path d="M1.500 1.500h8.500l4.500 4.500v13.500h-13z" fill="#3d94ea" stroke="#8d8d8d" stroke-width="1.100"/><path d="M10 1.500v4.500h4.500z" fill="#777"/><circle cx="2" cy="8" r="2.500" fill="#666"/></svg>
<div class="mi" style="top:62.1px">背景</div>
<div class="marr" style="top:65.1px"></div>
<svg style="left:19px;top:82.8px" width="24" height="25.100" viewBox="0 -1 22 23"><path d="M1.500 1.500h8.500l4.500 4.500v13.500h-13z" fill="#fff" stroke="#8d8d8d" stroke-width="1.100"/><path d="M10 1.500v4.500h4.500z" fill="#777"/><path d="M4 8.500h8M4 10.500h8" stroke="#9cc8ee" stroke-width="1"/><text x="8" y="18" text-anchor="middle" font-family="Liberation Sans" font-size="8" fill="#3d94ea">#</text></svg>
<div class="mi" style="top:88.3px">贝茨编号</div>
<div class="marr" style="top:91.3px"></div>
<svg style="left:17.5px;top:115.4px" width="24" height="25.100" viewBox="0 -1 22 23"><path d="M1.500 1.500h8.500l4.500 4.500v13.500h-13z" fill="#fff" stroke="#8d8d8d" stroke-width="1.100"/><path d="M10 1.500v4.500h4.500z" fill="#777"/><path d="M3.500 7h5M3.500 10h8.500M3.500 13h8.500M3.500 16h5" stroke="#a8a8a8" stroke-width="1"/><circle cx="14" cy="16" r="5" fill="#7ab648" stroke="#fff" stroke-width="0.800"/><path d="M14 13v6M11 16h6" stroke="#fff" stroke-width="1.800"/></svg>
<div class="mi" style="top:120.9px">插入页面</div>
<div class="marr" style="top:123.9px"></div>
<svg style="left:17.5px;top:141.6px" width="24" height="25.100" viewBox="0 -1 22 23"><path d="M9.500 1c3-1 6-0.500 7.500 0.500l2 10-7 3z" fill="#8fc6f2"/><path d="M12 3.500l3.500 1M12.500 6.500l3.500 1M13 9.500l3 1" stroke="#fff" stroke-width="1"/><rect x="1" y="5" width="10.500" height="12.500" fill="#fff" stroke="#8d8d8d" stroke-width="1"/><rect x="4.500" y="8.500" width="10.500" height="12.500" fill="#fff" stroke="#7a7a7a" stroke-width="1.100"/><path d="M6.500 12h6.500M6.500 14.500h6.500M6.500 17h6.500" stroke="#8a8a8a" stroke-width="1"/></svg>
<div class="mi" style="top:147.1px">提取页面...</div>
<div class="sc" style="top:147.1px">Ctrl+Shift+E</div>
<svg style="left:17.5px;top:167.8px" width="24" height="25.100" viewBox="0 -1 22 23"><g opacity="0.500"><path d="M1.500 1.500h8.500l4.500 4.500v13.500h-13z" fill="#fff" stroke="#8d8d8d" stroke-width="1.100"/><path d="M10 1.500v4.500h4.500z" fill="#777"/><path d="M5.500 9v7M10 9v7" stroke="#8fc6f2" stroke-width="1.500"/><path d="M4 11l1.500-2.500 1.500 2.500zM8.500 14l1.500 2.500 1.500-2.500z" fill="#8fc6f2"/></g></svg>
<div class="mi" style="top:173.3px;color:#9a9a9a">拆分文档...</div>
<svg style="left:17.5px;top:194.0px" width="24" height="25.100" viewBox="0 -1 22 23"><rect x="1" y="2.500" width="9.500" height="11.500" fill="#fff" stroke="#8d8d8d" stroke-width="1"/><rect x="7.500" y="1" width="9.500" height="11.500" fill="#fff" stroke="#8d8d8d" stroke-width="1"/><rect x="4" y="7.500" width="10.500" height="13" fill="#fff8e8" stroke="#f0a030" stroke-width="1.300"/><path d="M6 11h6.500M6 13.500h6.500M6 16h6.500" stroke="#f0a030" stroke-width="1"/></svg>
<div class="mi" style="top:199.5px">替换页面...</div>
<svg style="left:17.5px;top:220.2px" width="24" height="25.100" viewBox="0 -1 22 23"><path d="M1.500 1.500h8.500l4.500 4.500v13.500h-13z" fill="#fff" stroke="#8d8d8d" stroke-width="1.100"/><path d="M10 1.500v4.500h4.500z" fill="#777"/><path d="M3.500 7h5M3.500 10h8.500M3.500 13h8.500M3.500 16h5" stroke="#a8a8a8" stroke-width="1"/><circle cx="14" cy="16" r="5" fill="#ee5a48" stroke="#fff" stroke-width="0.800"/><path d="M11.800 13.800l4.400 4.400M16.200 13.800l-4.400 4.400" stroke="#fff" stroke-width="1.700"/></svg>
<div class="mi" style="top:225.7px">删除页面</div>
<div class="marr" style="top:228.7px"></div>
<svg style="left:17.5px;top:252.8px" width="24" height="25.100" viewBox="0 -1 22 23"><path d="M1 1h9v3M1 1v15h3" fill="none" stroke="#a8a8a8" stroke-width="1"/><path d="M3 3h9v3M3 3v15h3" fill="none" stroke="#9a9a9a" stroke-width="1"/><path d="M5 5h7l4 4v12h-11z" fill="#fff" stroke="#7a7a7a" stroke-width="1.100"/><path d="M12 5v4h4z" fill="#666"/><path d="M8 10v7h7M6.500 12h7v6.500" fill="none" stroke="#3d94ea" stroke-width="1.200"/></svg>
<div class="mi" style="top:258.3px">裁剪页面</div>
<div class="marr" style="top:261.3px"></div>
<svg style="left:17.5px;top:279.0px" width="24" height="25.100" viewBox="0 -1 22 23"><g transform="translate(3,3)"><path d="M1.500 1.500h8.500l4.500 4.500v11.500h-13z" fill="#fff" stroke="#8d8d8d" stroke-width="1.100"/><path d="M10 1.500v4.500h4.500z" fill="#777"/><path d="M3.500 7h5M3.500 10h8.500M3.500 13h8.500" stroke="#a8a8a8" stroke-width="1"/></g><path d="M1.500 8.500a6.500 6.500 0 0 1 5-6.500" fill="none" stroke="#3d94ea" stroke-width="1.700"/><path d="M5.500-0.500l3.500 2.500-3.800 2z" fill="#3d94ea"/><path d="M19.500 14a6.500 6.500 0 0 1-5 6.500" fill="none" stroke="#3d94ea" stroke-width="1.700"/><path d="M15.500 23l-3.500-2.500 3.800-2z" fill="#3d94ea"/></svg>
<div class="mi" style="top:284.5px">旋转页面...</div>
<div class="sc" style="top:284.5px">Ctrl+Shift+R</div>
<svg style="left:17.5px;top:311.0px" width="24" height="25.100" viewBox="0 -1 22 23"><path d="M1 1h8M1 1v14" fill="none" stroke="#a8a8a8" stroke-width="1"/><path d="M3 3h8M3 3v14" fill="none" stroke="#9a9a9a" stroke-width="1"/><path d="M5 5h7l4 4v12h-11z" fill="#fff" stroke="#7a7a7a" stroke-width="1.100"/><path d="M12 5v4h4z" fill="#666"/><path d="M7 10h4M7 12.500h7M7 15h4" stroke="#a8a8a8" stroke-width="1"/><circle cx="15" cy="17" r="5" fill="#3d94ea"/><circle cx="12.500" cy="17" r="0.900" fill="#fff"/><circle cx="15" cy="17" r="0.900" fill="#fff"/><circle cx="17.500" cy="17" r="0.900" fill="#fff"/></svg>
<div class="mi" style="top:316.5px">更多页面</div>
<div class="marr" style="top:319.5px"></div>
<svg style="left:19px;top:343.7px" width="24" height="25.100" viewBox="0 -1 22 23"><rect x="1.500" y="1.500" width="14" height="18" rx="1" fill="#fff" stroke="#8d8d8d" stroke-width="1.100"/><circle cx="7" cy="7" r="2.800" fill="none" stroke="#f0803a" stroke-width="1.300"/><path d="M5.500 9.500l-1 3.500 2.500-1 2.500 1-1-3.500" fill="#f0803a"/><path d="M11 6h3M11 9h3M4 15h9.500" stroke="#e8604a" stroke-width="1"/></svg>
<div class="mi" style="top:349.2px">数字签名</div>
<div class="marr" style="top:352.2px"></div>
<svg style="left:19px;top:369.9px" width="24" height="25.100" viewBox="0 -1 22 23"><path d="M1.500 1.500h8.500l4.500 4.500v13.500h-13z" fill="#fff" stroke="#8d8d8d" stroke-width="1.100"/><path d="M10 1.500v4.500h4.500z" fill="#777"/><path d="M3.500 6.500h4M3.500 9h6" stroke="#a8a8a8" stroke-width="1"/><path d="M2.500 16c1-3 2.500-4 3-2s1.500 2 2.500 0.500 2-0.500 3 0.500" fill="none" stroke="#e8604a" stroke-width="1"/><path d="M10.500 15.500l1-3 6-6.500 2 2-6 6.500z" fill="#3d94ea"/></svg>
<div class="mi" style="top:375.4px">签名与缩写</div>
<div class="marr" style="top:378.4px"></div>
<svg style="left:19px;top:402.7px" width="24" height="25.100" viewBox="0 -1 22 23"><path d="M1.500 1.500h8.500l4.500 4.500v13.500h-13z" fill="#fff" stroke="#8d8d8d" stroke-width="1.100"/><path d="M10 1.500v4.500h4.500z" fill="#777"/><path d="M3.500 6.500h5" stroke="#e8604a" stroke-width="1.600"/><path d="M3.500 9.500h7M3.500 12.500h6" stroke="#e8604a" stroke-width="1.600"/><path d="M3.500 15.500h4" stroke="#a8a8a8" stroke-width="1"/><path d="M9.500 16.500l1-3 6.500-7 2 2-6.500 7z" fill="#3d94ea"/></svg>
<div class="mi" style="top:408.2px">加密</div>
<div class="marr" style="top:411.2px"></div>
<svg style="left:19px;top:429.1px" width="24" height="25.100" viewBox="0 -1 22 23"><text x="0" y="9" font-family="Liberation Sans" font-size="10.500" fill="#3d94ea" textLength="20">ABC</text><path d="M3 15.500l4.500 4.500 9-9" fill="none" stroke="#6ab03a" stroke-width="3"/></svg>
<div class="mi" style="top:434.6px">拼写检查</div>
<div class="sc" style="top:434.6px">F7</div>
<div class="mi" style="left:17px;top:467.6px;color:#8a8a8a">运行:</div>
<svg style="left:46.500px;top:468.6px" width="16" height="13" viewBox="0 0 16 13"><rect x="0.700" y="0.700" width="14" height="10.600" rx="1" fill="#fdfdff" stroke="#8fa6cc" stroke-width="1.200"/><path d="M0.700 1.300h14" stroke="#8fa6cc" stroke-width="1.600"/></svg>
<div class="mi" style="left:65.500px;top:467.6px;color:#8a8a8a">&lt;无&gt;</div>
<div class="marr" style="top:470.6px;border-left-color:#aaa"></div>
</div>
<div id="sm" class="menu" style="left:369px;top:84px;width:104.500px;height:93px">
<div class="a" style="left:4px;top:3.800px;width:95px;height:25.200px;background:linear-gradient(#fbeebc 0,#f5dc8c 50%,#f2d47c 100%);border:1px solid #b5a67a;border-radius:3px"></div>
<div class="msep" style="top:60.0px;left:7px;right:7px"></div>
<svg style="left:18px;top:4.2px" width="24" height="25.100" viewBox="0 -1 22 23"><path d="M1.500 1.500h8.500l4.500 4.500v13.500h-13z" fill="#fff" stroke="#8d8d8d" stroke-width="1.100"/><path d="M10 1.500v4.500h4.500z" fill="#777"/><g stroke="#e98e7a" stroke-width="1.150" fill="none"><path d="M3.5 7.5h8M2.5 10.5h10M7.5 5.5v4.500M5.5 10.5v8M10.0 10.5v8M5.5 15.0l-1.500 3.500"/></g><circle cx="14.500" cy="16" r="5" fill="#7ab648" stroke="#fff" stroke-width="0.800"/><path d="M14.500 13v6M11.500 16h6" stroke="#fff" stroke-width="1.800"/></svg>
<div class="mi" style="left:43px;top:9.7px">添加...</div>
<svg style="left:18px;top:30.5px" width="24" height="25.100" viewBox="0 -1 22 23"><path d="M1.500 1.500h8.500l4.500 4.500v13.500h-13z" fill="#fff" stroke="#8d8d8d" stroke-width="1.100"/><path d="M10 1.500v4.500h4.500z" fill="#777"/><g stroke="#e98e7a" stroke-width="1.150" fill="none"><path d="M3.5 7.5h8M2.5 10.5h10M7.5 5.5v4.500M5.5 10.5v8M10.0 10.5v8M5.5 15.0l-1.500 3.500"/></g><rect x="11.200" y="13.800" width="6.200" height="7" rx="0.800" fill="#f0644e"/><rect x="10.600" y="12.400" width="7.400" height="1.400" fill="#f0644e"/></svg>
<div class="mi" style="left:43px;top:36.0px">全部删除...</div>
<svg style="left:18px;top:63.0px" width="24" height="25.100" viewBox="0 -1 22 23"><path d="M1.500 1.500h8.500l4.500 4.500v13.500h-13z" fill="#fff" stroke="#8d8d8d" stroke-width="1.100"/><path d="M10 1.500v4.500h4.500z" fill="#777"/><g stroke="#e98e7a" stroke-width="1.150" fill="none"><path d="M3.5 7.5h8M2.5 10.5h10M7.5 5.5v4.500M5.5 10.5v8M10.0 10.5v8M5.5 15.0l-1.500 3.500"/></g><g transform="translate(15,16.800) scale(0.920)"><circle r="2.800" fill="#f4f4f4" stroke="#808080" stroke-width="1.800"/><g stroke="#808080" stroke-width="1.700"><path d="M0-5.300v1.800M0 3.500v1.800M-5.300 0h1.800M3.500 0h1.800M-3.700-3.700l1.300 1.300M2.400 2.400l1.300 1.300M3.700-3.700l-1.300 1.300M-2.400 2.400l-1.300 1.300"/></g></g></svg>
<div class="mi" style="left:43px;top:68.5px">管理...</div>
</div>
<!-- ANNOTATIONS -->
<svg style="left:0;top:0;pointer-events:none" width="1200" height="758" viewBox="0 0 1200 758">
<path d="M144.700 16.100h328.100q2.900 0 2.900 2.900v103.800q0 2.900-2.900 2.900h-328.100q-2.900 0-2.900-2.900v-103.800q0-2.900 2.900-2.900zM147.500 22v98.100h322.300v-98.100z" fill="#fdb913" fill-rule="evenodd"/>
<path d="M312.300 261L313.600 261.700 374.600 146.500 376.800 143.600 376.200 130.800 362.800 139.700 365.600 141.500z" fill="#fdb913"/>
</svg>
</body>
</html>
